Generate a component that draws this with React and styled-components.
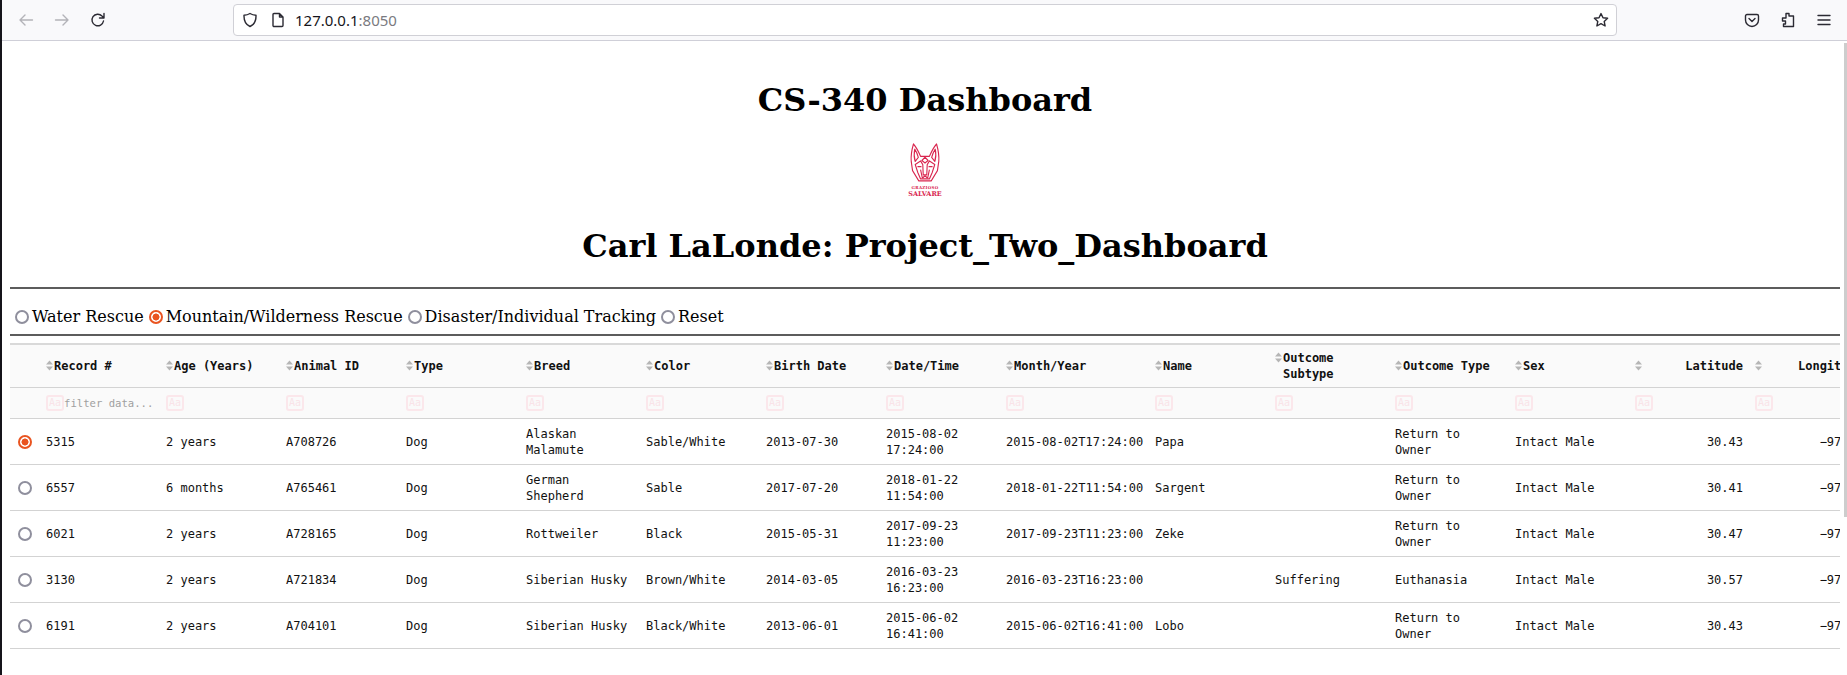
import React from 'react';
import styled, { createGlobalStyle } from 'styled-components';

const GlobalStyle = createGlobalStyle`
  html, body { margin: 0; padding: 0; background: #fff; overflow: hidden; }
  * { box-sizing: border-box; }
`;

const MONO = '"DejaVu Sans Mono", monospace';
const SERIF = '"DejaVu Serif", serif';

const S = {
  Window: styled.div`
    display: flex;
    width: 1847px;
    height: 675px;
    overflow: hidden;
    background: #fff;
  `,
  Edge: styled.div`
    flex: 0 0 2px;
    background: #15141a;
  `,
  Column: styled.div`
    flex: 1;
    min-width: 0;
    display: flex;
    flex-direction: column;
  `,
  Toolbar: styled.div`
    flex: 0 0 41px;
    display: flex;
    align-items: center;
    padding: 0 0 0 6px;
    background: #f9f9fb;
    border-bottom: 1px solid #cfcfd8;
    color: #2b2a33;
  `,
  NavButton: styled.span`
    display: flex;
    width: 36px;
    justify-content: center;
    color: ${(p) => (p.$off ? '#b3b3b8' : '#2b2a33')};
  `,
  UrlBar: styled.div`
    flex: 0 0 1384px;
    height: 32px;
    margin-left: 117px;
    display: flex;
    align-items: center;
    padding: 0 7px 0 8px;
    gap: 12px;
    background: #fff;
    border: 1px solid #d0d0d6;
    border-radius: 4px;
    font: 15px "Noto Sans", sans-serif;
  `,
  Url: styled.span`
    flex: 1;
    margin-left: -3px;
    color: #15141a;
  `,
  Port: styled.span`
    color: #7a7a80;
  `,
  ToolIcons: styled.div`
    display: flex;
    gap: 20px;
    margin-left: 127px;
  `,
  Body: styled.div`
    flex: 1;
    display: flex;
    min-height: 0;
  `,
  Page: styled.div`
    flex: 1;
    min-width: 0;
    padding: 0 4px 0 8px;
    font-family: ${SERIF};
    color: #000;
  `,
  Scrollbar: styled.div`
    flex: 0 0 3px;
    height: 474px;
    margin-top: 2px;
    background: #cdcdcd;
  `,
  Title: styled.h1`
    margin: 40px 0 0;
    height: 38px;
    font: bold 32px/38px ${SERIF};
    text-align: center;
  `,
  LogoRow: styled.div`
    display: flex;
    justify-content: center;
    margin: 24px 0 0;
    height: 56px;
  `,
  Logo: styled.div`
    width: 32px;
    display: flex;
    flex-direction: column;
    align-items: center;
    color: #d9264f;
  `,
  LogoCaption: styled.span`
    font: ${(p) => (p.$big ? 'bold 6.5px/7px' : 'bold 4px/7px')} ${SERIF};
    white-space: nowrap;
    letter-spacing: ${(p) => (p.$big ? '0' : '0.3px')};
  `,
  SubTitle: styled.h1`
    margin: 28px 0 0;
    height: 38px;
    font: bold 32px/38px ${SERIF};
    text-align: center;
  `,
  Rule: styled.hr`
    margin: ${(p) => p.$top}px 0 0;
    border: 0;
    border-top: 2px solid #5c5c5c;
    height: 2px;
  `,
  Radios: styled.div`
    display: flex;
    align-items: center;
    height: 45px;
    padding: 10px 0 0 5px;
    font: 16px/20px ${SERIF};
  `,
  RadioLabel: styled.label`
    display: flex;
    align-items: center;
    margin-right: 5px;
    gap: 3px;
  `,
  RadioDot: styled.span`
    display: inline-block;
    flex: none;
    width: 14px;
    height: 14px;
    border-radius: 50%;
    border: 2px solid ${(p) => (p.$on ? '#e95420' : '#8f8f9d')};
    background: ${(p) => (p.$on ? 'radial-gradient(circle, #e95420 0 3.2px, #fff 3.8px)' : '#fff')};
  `,
  TableWrap: styled.div`
    margin-top: 7px;
    overflow: hidden;
  `,
  Table: styled.table`
    width: 1865px;
    table-layout: fixed;
    border-collapse: collapse;
    font: 12px/16px ${MONO};
    color: #111;
  `,
  HeadRow: styled.tr`
    height: 43px;
    background: #fafafa;
    border-top: 2px solid #d9d9d9;
    border-bottom: 1px solid #d3d3d3;
  `,
  FilterRow: styled.tr`
    height: 31px;
    background: #fafafa;
    border-bottom: 1px solid #d3d3d3;
  `,
  Row: styled.tr`
    height: 46px;
    border-bottom: 1px solid #d3d3d3;
  `,
  Th: styled.th`
    padding: 0 ${(p) => (p.$right ? 12 : 13)}px 0 0;
    font-weight: bold;
    text-align: left;
  `,
  HeadCell: styled.div`
    display: flex;
    align-items: ${(p) => (p.$wrap ? 'flex-start' : 'center')};
  `,
  HeadLabel: styled.span`
    flex: 1;
    text-align: ${(p) => (p.$right ? 'right' : 'left')};
    white-space: ${(p) => (p.$wrap ? 'normal' : 'nowrap')};
  `,
  Sort: styled.svg`
    flex: none;
    width: 7px;
    height: 11px;
    margin-right: 1px;
    margin-top: ${(p) => (p.$wrap ? '2px' : '0')};
  `,
  FilterCell: styled.td`
    padding: 0;
  `,
  FilterInner: styled.div`
    display: flex;
    align-items: center;
    gap: 0;
    font-size: 10.6px;
    color: #a0a0a0;
    white-space: nowrap;
  `,
  CaseBox: styled.span`
    flex: none;
    width: 18px;
    height: 16px;
    border: 2px solid #fbe7eb;
    border-radius: 3px;
    font: 10px/12px ${MONO};
    color: #f9e3e8;
    text-align: center;
  `,
  Td: styled.td`
    padding: 2px ${(p) => (p.$right ? 12 : 13)}px 0 0;
    text-align: ${(p) => (p.$right ? 'right' : 'left')};
    white-space: ${(p) => (p.$nowrap ? 'nowrap' : 'normal')};
  `,
  RadioCell: styled.td`
    padding: 5px 0 0 8px;
  `,
};

const COLUMNS = [
  { key: 'id', label: 'Record #', width: 120 },
  { key: 'age', label: 'Age (Years)', width: 120 },
  { key: 'animal', label: 'Animal ID', width: 120 },
  { key: 'type', label: 'Type', width: 120 },
  { key: 'breed', label: 'Breed', width: 120 },
  { key: 'color', label: 'Color', width: 120 },
  { key: 'birth', label: 'Birth Date', width: 120 },
  { key: 'date', label: 'Date/Time', width: 120 },
  { key: 'month', label: 'Month/Year', width: 149, nowrap: true },
  { key: 'name', label: 'Name', width: 120 },
  { key: 'subtype', label: 'Outcome Subtype', width: 120, wrap: true },
  { key: 'outcome', label: 'Outcome Type', width: 120 },
  { key: 'sex', label: 'Sex', width: 120 },
  { key: 'lat', label: 'Latitude', width: 120, right: true },
  { key: 'lng', label: 'Longitude', width: 120, right: true, nowrap: true },
];

const ROWS = [
  { id: 5315, age: '2 years', animal: 'A708726', type: 'Dog', breed: 'Alaskan Malamute', color: 'Sable/White', birth: '2013-07-30', date: '2015-08-02 17:24:00', month: '2015-08-02T17:24:00', name: 'Papa', subtype: '', outcome: 'Return to Owner', sex: 'Intact Male', lat: '30.43', lng: '−97.64' },
  { id: 6557, age: '6 months', animal: 'A765461', type: 'Dog', breed: 'German Shepherd', color: 'Sable', birth: '2017-07-20', date: '2018-01-22 11:54:00', month: '2018-01-22T11:54:00', name: 'Sargent', subtype: '', outcome: 'Return to Owner', sex: 'Intact Male', lat: '30.41', lng: '−97.56' },
  { id: 6021, age: '2 years', animal: 'A728165', type: 'Dog', breed: 'Rottweiler', color: 'Black', birth: '2015-05-31', date: '2017-09-23 11:23:00', month: '2017-09-23T11:23:00', name: 'Zeke', subtype: '', outcome: 'Return to Owner', sex: 'Intact Male', lat: '30.47', lng: '−97.38' },
  { id: 3130, age: '2 years', animal: 'A721834', type: 'Dog', breed: 'Siberian Husky', color: 'Brown/White', birth: '2014-03-05', date: '2016-03-23 16:23:00', month: '2016-03-23T16:23:00', name: '', subtype: 'Suffering', outcome: 'Euthanasia', sex: 'Intact Male', lat: '30.57', lng: '−97.42' },
  { id: 6191, age: '2 years', animal: 'A704101', type: 'Dog', breed: 'Siberian Husky', color: 'Black/White', birth: '2013-06-01', date: '2015-06-02 16:41:00', month: '2015-06-02T16:41:00', name: 'Lobo', subtype: '', outcome: 'Return to Owner', sex: 'Intact Male', lat: '30.43', lng: '−97.71' },
];

const RADIOS = ['Water Rescue', 'Mountain/Wilderness Rescue', 'Disaster/Individual Tracking', 'Reset'];

const Icon = ({ size = 16, children, strokeWidth = 1.4 }) => (
  <svg width={size} height={size} viewBox="0 0 16 16" fill="none" stroke="currentColor" strokeWidth={strokeWidth} strokeLinecap="round" strokeLinejoin="round">
    {children}
  </svg>
);

const SortIcon = ({ wrap }) => (
  <S.Sort $wrap={wrap} viewBox="0 0 7 11">
    <path d="M3.5 0.5 L7 4.5 H0 Z M3.5 10.5 L7 6.5 H0 Z" fill="#b5b5b5" />
  </S.Sort>
);

const DogLogo = () => (
  <svg width="32" height="41" viewBox="0 0 36 40" preserveAspectRatio="none" fill="none" stroke="currentColor" strokeWidth="1.25" strokeLinejoin="round">
    <path d="M5 1 C3 7 2 13 2.5 18 L4 27 L11 37 H25 L32 27 L33.5 18 C34 13 33 7 31 1 C28 4 25 9 23 13 H13 C11 9 8 4 5 1 Z" />
    <path d="M6.5 6 C5.5 10 5.5 14 7 18 L10.5 14 C9.5 11 8 8 6.5 6 Z M29.5 6 C30.5 10 30.5 14 29 18 L25.5 14 C26.5 11 28 8 29.5 6 Z" />
    <path d="M18 14 L21.5 17 L18 19.5 L14.5 17 Z" />
    <path d="M7 21 L13 17.5 L15.5 21 L16 31 H20 L20.5 21 L23 17.5 L29 21 L26 29 L23 35 H13 L10 29 Z" />
    <path d="M9.5 23 L14 23 M22 23 L26.5 23 M15 34.5 L18 32 L21 34.5 M13 26 L15 34 M23 26 L21 34" />
  </svg>
);

export default function App() {
  return (
    <S.Window>
      <GlobalStyle />
      <S.Edge />
      <S.Column>
        <S.Toolbar>
          <S.NavButton $off>
            <Icon><path d="M14.5 8 H2 M7 3 L2 8 L7 13" /></Icon>
          </S.NavButton>
          <S.NavButton $off>
            <Icon><path d="M1.5 8 H14 M9 3 L14 8 L9 13" /></Icon>
          </S.NavButton>
          <S.NavButton>
            <Icon><path d="M13.5 9 A5.8 5.8 0 1 1 12 4 L14 6 M14 1.5 V6 H9.5" /></Icon>
          </S.NavButton>
          <S.UrlBar>
            <Icon><path d="M8 1.5 C10 2.8 12 3.2 14 3.2 C14.2 9 12 12.8 8 14.5 C4 12.8 1.8 9 2 3.2 C4 3.2 6 2.8 8 1.5 Z" /></Icon>
            <Icon><path d="M3 2.5 A1 1 0 0 1 4 1.5 H9.5 L13 5 V13.5 A1 1 0 0 1 12 14.5 H4 A1 1 0 0 1 3 13.5 Z M9.5 1.5 V5 H13" /></Icon>
            <S.Url>127.0.0.1<S.Port>:8050</S.Port></S.Url>
            <Icon><path d="M8 1.6 L10 5.8 L14.6 6.3 L11.2 9.4 L12.1 14 L8 11.7 L3.9 14 L4.8 9.4 L1.4 6.3 L6 5.8 Z" /></Icon>
          </S.UrlBar>
          <S.ToolIcons>
            <Icon><path d="M1.5 4 A1.5 1.5 0 0 1 3 2.5 H13 A1.5 1.5 0 0 1 14.5 4 V8 A6.5 6.5 0 0 1 1.5 8 Z M5 6.5 L8 9.5 L11 6.5" /></Icon>
            <Icon><path d="M6 1.5 H9 V4 H13.5 V14.5 H3.5 V12 H5.5 V9 H2.5 V6 H6 Z" /></Icon>
            <Icon><path d="M2 3.5 H14 M2 8 H14 M2 12.5 H14" /></Icon>
          </S.ToolIcons>
        </S.Toolbar>
        <S.Body>
          <S.Page>
            <S.Title>CS-340 Dashboard</S.Title>
            <S.LogoRow>
              <S.Logo>
                <DogLogo />
                <S.LogoCaption>GRAZIOSO</S.LogoCaption>
                <S.LogoCaption $big>SALVARE</S.LogoCaption>
              </S.Logo>
            </S.LogoRow>
            <S.SubTitle>Carl LaLonde: Project_Two_Dashboard</S.SubTitle>
            <S.Rule $top={22} />
            <S.Radios>
              {RADIOS.map((label, i) => (
                <S.RadioLabel key={label}>
                  <S.RadioDot $on={i === 1} />
                  {label}
                </S.RadioLabel>
              ))}
            </S.Radios>
            <S.Rule $top={0} />
            <S.TableWrap>
              <S.Table>
                <colgroup>
                  <col style={{ width: 36 }} />
                  {COLUMNS.map((c) => <col key={c.key} style={{ width: c.width }} />)}
                </colgroup>
                <thead>
                  <S.HeadRow>
                    <S.Th />
                    {COLUMNS.map((c) => (
                      <S.Th key={c.key} $right={c.right}>
                        <S.HeadCell $wrap={c.wrap}>
                          <SortIcon wrap={c.wrap} />
                          <S.HeadLabel $right={c.right} $wrap={c.wrap}>{c.label}</S.HeadLabel>
                        </S.HeadCell>
                      </S.Th>
                    ))}
                  </S.HeadRow>
                  <S.FilterRow>
                    <S.FilterCell />
                    {COLUMNS.map((c, i) => (
                      <S.FilterCell key={c.key}>
                        <S.FilterInner>
                          <S.CaseBox>Aa</S.CaseBox>
                          {i === 0 && 'filter data...'}
                        </S.FilterInner>
                      </S.FilterCell>
                    ))}
                  </S.FilterRow>
                </thead>
                <tbody>
                  {ROWS.map((r, ri) => (
                    <S.Row key={r.id}>
                      <S.RadioCell><S.RadioDot $on={ri === 0} /></S.RadioCell>
                      {COLUMNS.map((c) => (
                        <S.Td key={c.key} $right={c.right} $nowrap={c.nowrap}>{r[c.key]}</S.Td>
                      ))}
                    </S.Row>
                  ))}
                </tbody>
              </S.Table>
            </S.TableWrap>
          </S.Page>
          <S.Scrollbar />
        </S.Body>
      </S.Column>
    </S.Window>
  );
}
